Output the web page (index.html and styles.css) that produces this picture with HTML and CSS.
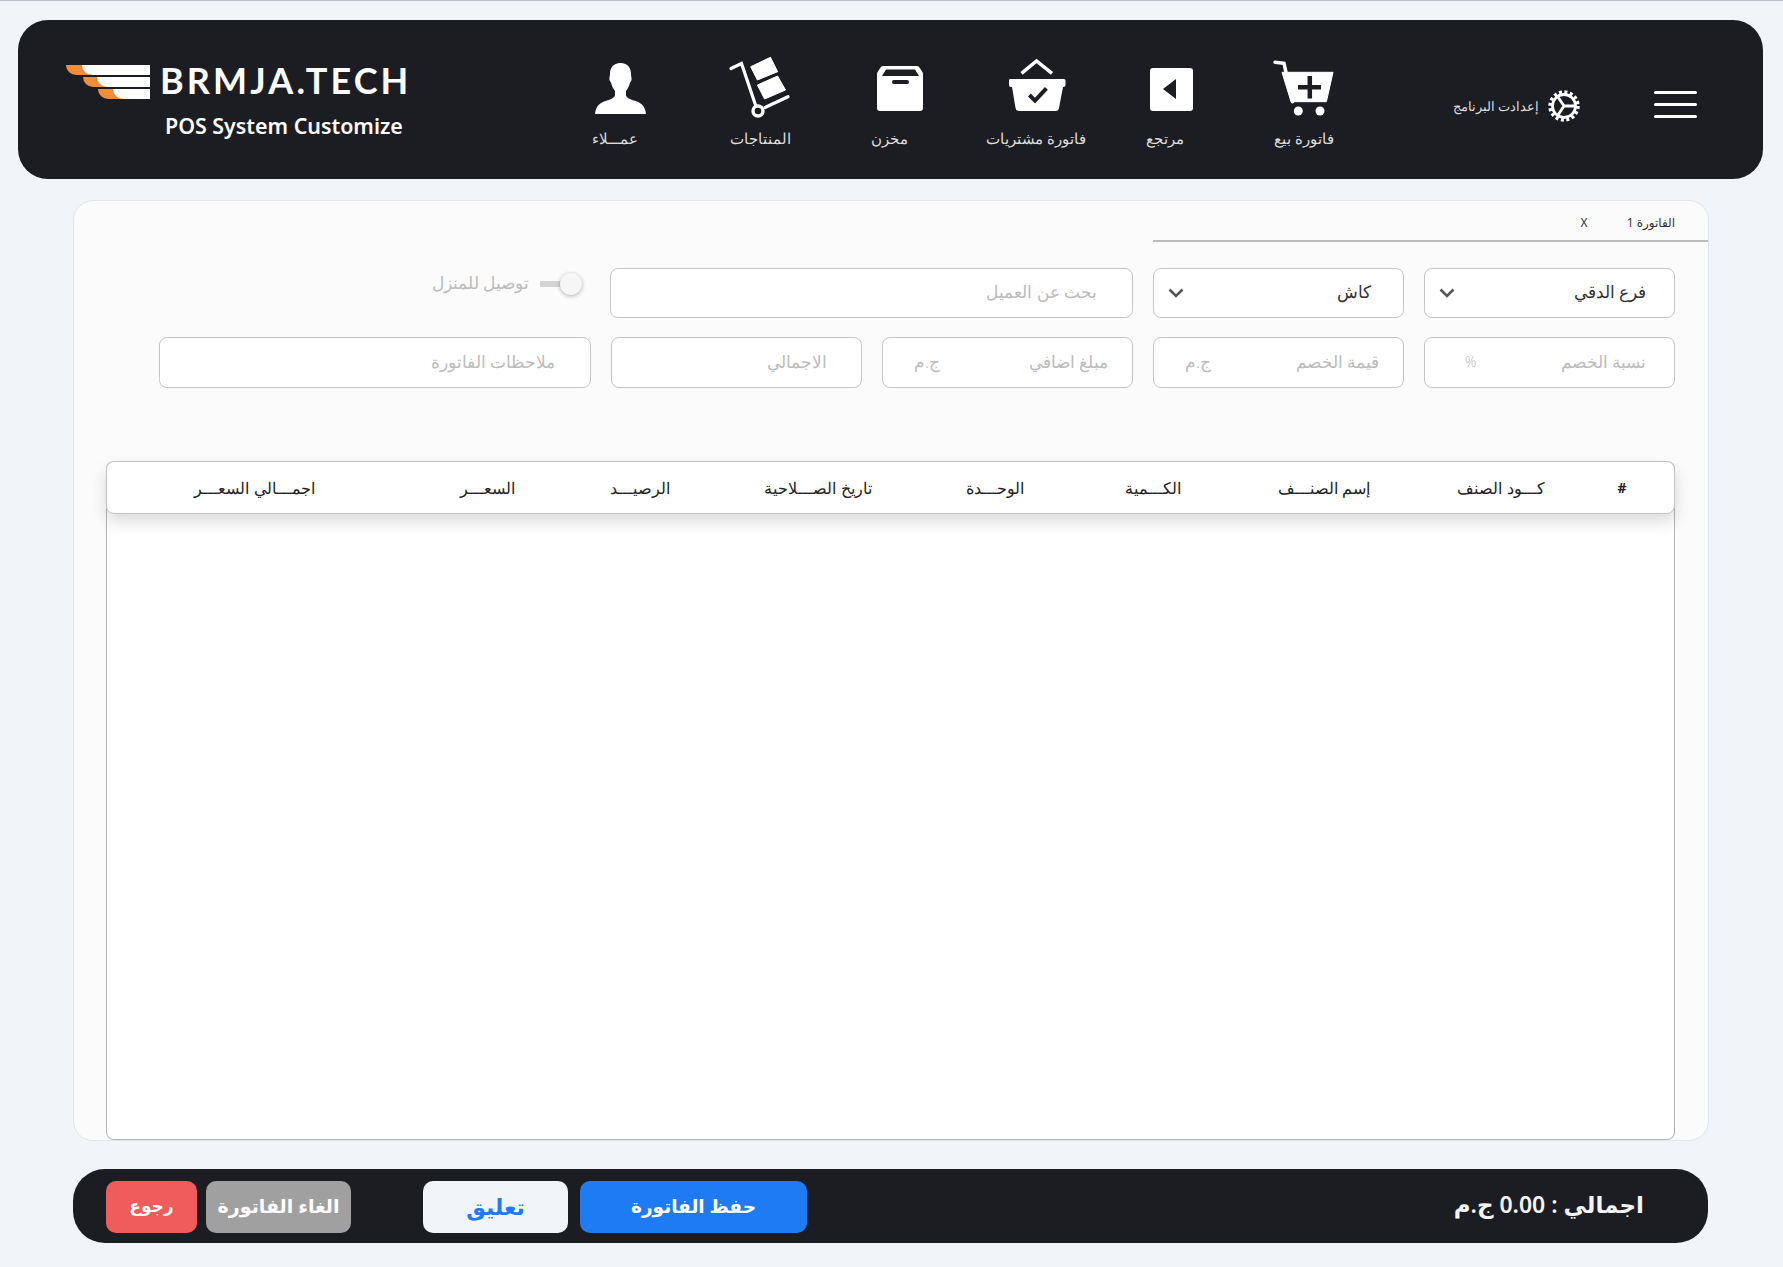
FILE: index.html
```html
<!DOCTYPE html>
<html lang="ar" dir="rtl">

<head>
    <meta charset="UTF-8">
    <meta name="viewport" content="width=device-width, initial-scale=1.0">
    <title>فاتورة بيع</title>
    <link rel="stylesheet" href="styles.css">
</head>

<body>
    <header class="topbar">
        <div class="burger"><span></span><span></span><span></span></div>

        <div class="settings">
            <svg class="gear" viewBox="0 0 32 32" width="32" height="32">
                <circle cx="16" cy="16" r="14" fill="none" stroke="#fff" stroke-width="3.4" stroke-dasharray="3 2.5"></circle>
                <circle cx="16" cy="16" r="11.5" fill="none" stroke="#fff" stroke-width="2.8"></circle>
                <path d="M16 16L10 7M16 16L10 25M16 16H27" stroke="#fff" stroke-width="2.8" fill="none"></path>
            </svg>
            <span>إعدادت البرنامج</span>
        </div>

        <nav class="nav">
            <a class="nav-item w-cart">
                <svg viewBox="0 0 64 64" width="64" height="64">
                    <path d="M3 6.300L12 7.300L20.500 45.700" fill="none" stroke="#fff" stroke-width="3.500" stroke-linecap="round"></path>
                    <path d="M10 16.300H61L54.400 45.700H19Z" fill="#fff" stroke="#fff" stroke-linejoin="round"></path>
                    <path d="M26 31.300H49M37.800 20V42.500" stroke="#1c1d22" stroke-width="4.500"></path>
                    <circle cx="26.300" cy="55" r="4.500" fill="#fff"></circle>
                    <circle cx="48" cy="55" r="4.500" fill="#fff"></circle>
                </svg>
                <span>فاتورة بيع</span>
            </a>
            <a class="nav-item w-return">
                <svg viewBox="0 0 64 64" width="64" height="64">
                    <path fill-rule="evenodd" d="M20 12H57a3 3 0 0 1 3 3V52a3 3 0 0 1-3 3H20a3 3 0 0 1-3-3V15a3 3 0 0 1 3-3ZM43 23L30 33L43 43Z" fill="#fff"></path>
                </svg>
                <span>مرتجع</span>
            </a>
            <a class="nav-item w-basket">
                <svg viewBox="0 0 64 64" width="64" height="64">
                    <path d="M17.500 17.300L32.500 5L48 17.300" fill="none" stroke="#fff" stroke-width="3.500"></path>
                    <path d="M6 23H60a1.500 1.500 0 0 1 1.500 1.500V29a2 2 0 0 1-2 2H59L55 52a3.500 3.500 0 0 1-3.500 3H15a3.500 3.500 0 0 1-3.500-3L8 31H7a2 2 0 0 1-2-2V24.500A1.500 1.500 0 0 1 6 23Z" fill="#fff"></path>
                    <path d="M25.400 39L31 44.700L42.400 32.300" fill="none" stroke="#1c1d22" stroke-width="4"></path>
                </svg>
                <span>فاتورة مشتريات</span>
            </a>
            <a class="nav-item w-box">
                <svg class="box-icon" viewBox="0 0 64 64" width="64" height="64">
                    <path fill-rule="evenodd" d="M25 10H59Q60.500 10 61.500 11.500L65 17V52a3 3 0 0 1-3 3H22a3 3 0 0 1-3-3V17L22.500 11.500Q23.500 10 25 10ZM28 13.500L24 20H61L57 13.500ZM36 24a2 2 0 0 0 0 4H49a2 2 0 0 0 0-4Z" fill="#fff"></path>
                </svg>
                <span>مخزن</span>
            </a>
            <a class="nav-item w-trolley">
                <svg viewBox="0 0 64 64" width="64" height="64">
                    <path d="M2 12.500L12.500 7.500L26.500 49" fill="none" stroke="#fff" stroke-width="3.200" stroke-linecap="round"></path>
                    <path d="M36 51.500L59 40.700" fill="none" stroke="#fff" stroke-width="3.200" stroke-linecap="round"></path>
                    <circle cx="29" cy="55" r="5" fill="none" stroke="#fff" stroke-width="3.400"></circle>
                    <path d="M21.700 10.700L41.500 1.300L48.600 15.700L28.400 24Z" fill="#fff" stroke="#fff" stroke-linejoin="round"></path>
                    <path d="M28.400 29L48.600 20L56.500 34L35.600 43Z" fill="#fff" stroke="#fff" stroke-linejoin="round"></path>
                </svg>
                <span>المنتاجات</span>
            </a>
            <a class="nav-item w-person">
                <svg viewBox="0 0 64 64" width="64" height="64">
                    <path d="M37.500 7C30 7 27 12 27 18c0 2-.6 3-.6 5s1 3 1.600 3.500c.6 3 2 6 4 8.500v4c0 2-3 4-8 5.500c-6 2-11 4-12 13.500h51c-1-9.500-6-11.500-12-13.500c-5-1.500-8-3.500-8-5.500v-4c2-2.500 3.400-5.500 4-8.500c.6-.5 1.600-1.500 1.600-3.500s-.6-3-.6-5c0-6-3-11-10.500-11z" fill="#fff"></path>
                </svg>
                <span>عمـــلاء</span>
            </a>
        </nav>

        <div class="logo" dir="ltr">
            <div class="logo-row">
                <svg viewBox="0 0 84 34" width="84" height="34">
                    <path d="M0 0H24V10H10A10 10 0 0 1 0 0Z" fill="#f28c38"></path>
                    <path d="M16 0H84V10H26A10 10 0 0 1 16 0Z" fill="#fff"></path>
                    <path d="M17 12H40V22H27A10 10 0 0 1 17 12Z" fill="#f28c38"></path>
                    <path d="M31 12H84V22H41A10 10 0 0 1 31 12Z" fill="#fff"></path>
                    <path d="M32 24H56V34H42A10 10 0 0 1 32 24Z" fill="#f28c38"></path>
                    <path d="M47 24H84V34H57A10 10 0 0 1 47 24Z" fill="#fff"></path>
                </svg>
                <span class="brand">BRMJA.TECH</span>
            </div>
            <div class="tagline">POS System Customize</div>
        </div>
    </header>

    <main class="panel">
        <div class="tabs">
            <span>الفاتورة 1</span>
            <span class="tab-close">X</span>
        </div>

        <div class="form-row">
            <div class="field w-251 pick">
                <span>فرع الدقي</span>
                <svg class="chevron" viewBox="0 0 16 10" width="16" height="10"><path d="M1.500 1.500L8 8L14.500 1.500" fill="none" stroke="#555" stroke-width="2.500"></path></svg>
            </div>
            <div class="field w-251 pick pick-cash">
                <span>كاش</span>
                <svg class="chevron" viewBox="0 0 16 10" width="16" height="10"><path d="M1.500 1.500L8 8L14.500 1.500" fill="none" stroke="#555" stroke-width="2.500"></path></svg>
            </div>
            <div class="field w-523 pad-35"><input type="text" placeholder="بحث عن العميل"></div>
            <div class="delivery">
                <span class="switch"></span>
                <span class="delivery-text">توصيل للمنزل</span>
            </div>
        </div>

        <div class="form-row">
            <div class="field w-251 row-2">
                <input type="text" placeholder="نسبة الخصم">
                <span class="unit unit-percent">%</span>
            </div>
            <div class="field w-251 row-2 pad-24">
                <input type="text" placeholder="قيمة الخصم">
                <span class="unit">ج.م</span>
            </div>
            <div class="field w-251 row-2 pad-24">
                <input type="text" placeholder="مبلغ اضافي">
                <span class="unit">ج.م</span>
            </div>
            <div class="field w-251 row-2 pad-34"><input type="text" placeholder="الاجمالي"></div>
            <div class="field w-432 row-2 pad-35"><input type="text" placeholder="ملاحظات الفاتورة"></div>
        </div>

        <section class="items">
            <div class="items-head">
                <span class="hash">#</span>
                <span>كـــود الصنف</span>
                <span>إسم الصنـــف</span>
                <span>الكـــمية</span>
                <span>الوحـــدة</span>
                <span>تاريخ الصـــلاحية</span>
                <span>الرصيـــد</span>
                <span>السعـــر</span>
                <span class="last-col">اجمـــالي السعـــر</span>
            </div>
        </section>
    </main>

    <footer class="bottombar">
        <div class="grand-total">اجمالي : 0.00 ج.م</div>
        <button class="btn btn-save">حفظ الفاتورة</button>
        <button class="btn btn-hold">تعليق</button>
        <button class="btn btn-cancel">الغاء الفاتورة</button>
        <button class="btn btn-back">رجوع</button>
    </footer>
</body>

</html>
```

FILE: styles.css
```css
* {
    box-sizing: border-box;
}

body {
    margin: 0;
    height: 1267px;
    overflow: hidden;
    background: #f1f4f9;
    border-top: 1px solid #b9c2cb;
    font-family: "Noto Sans", "DejaVu Sans", sans-serif;
}

.topbar {
    display: flex;
    align-items: flex-start;
    height: 159px;
    margin: 19px 20px 0 18px;
    padding: 36px 66px 0 48px;
    border-radius: 30px;
    background: #1c1d22;
    color: #fff;
}

.burger {
    display: flex;
    flex-direction: column;
    gap: 9px;
    width: 43px;
    margin-top: 35px;
}

.burger span {
    height: 3px;
    border-radius: 2px;
    background: #fff;
}

.settings {
    display: flex;
    align-items: center;
    gap: 9px;
    margin: 34px 74px 0 64px;
    font-size: 13px;
    font-weight: 300;
    color: #ddd;
}

.nav {
    display: flex;
}

.nav-item {
    display: flex;
    flex-direction: column;
    align-items: center;
    font-size: 15px;
    font-weight: 300;
    color: #ddd;
}

.nav-item svg {
    overflow: visible;
}

.nav-item span {
    margin-top: 8px;
    white-space: nowrap;
}

.w-cart { width: 170px; }
.w-return { width: 108px; }
.w-basket { width: 150px; }
.w-box { width: 142px; }
.w-trolley { width: 116px; }
.w-person { width: 176px; }

.logo {
    margin: 9px auto 0 0;
}

.logo-row {
    display: flex;
    align-items: flex-start;
    gap: 10px;
}

.brand {
    margin-top: -2px;
    font-family: "Lato", sans-serif;
    font-size: 36px;
    font-weight: 700;
    line-height: 34px;
    letter-spacing: 3.100px;
}

.tagline {
    margin: 14px 0 0 99px;
    font-size: 21.400px;
    font-weight: 600;
    line-height: 26px;
    white-space: nowrap;
}

.panel {
    display: flex;
    flex-direction: column;
    height: 941px;
    margin: 21px 74px 0 73px;
    padding: 0 33px 0 32px;
    border: 1px solid #e1e4e8;
    border-radius: 20px;
    background: #fbfbfb;
}

.tabs {
    display: flex;
    align-items: center;
    gap: 39px;
    height: 41px;
    width: 555px;
    margin-right: -33px;
    padding: 3px 33px 0 0;
    border-bottom: 2px solid #bbb;
    font-size: 12px;
    color: #333;
}

.form-row {
    display: flex;
    align-items: center;
    gap: 20px;
    margin-top: 19px;
}

.tabs + .form-row {
    margin-top: 26px;
}

.field {
    display: flex;
    align-items: center;
    justify-content: space-between;
    height: 50px;
    padding: 0 28px 4px;
    border: 1px solid #c6c6c6;
    border-radius: 8px;
    background: #fff;
    font-size: 17px;
    font-weight: 300;
    color: #333;
}

.row-2 {
    height: 51px;
    padding-bottom: 2px;
}

.field input {
    flex: 1;
    min-width: 0;
    padding: 0;
    border: 0;
    outline: 0;
    background: transparent;
    font: inherit;
    color: #333;
}

.field input::placeholder {
    color: #bbb;
    opacity: 1;
}

.w-251 { width: 251px; }
.w-523 { width: 523px; }
.w-432 { width: 432px; }

.pad-24 { padding-right: 24px; padding-left: 31px; }
.pad-34 { padding-right: 34px; }
.pad-35 { padding-right: 35px; }

.pick {
    padding-left: 14px;
    padding-bottom: 0;
}

.pick > span {
    padding-bottom: 4px;
}

.pick-cash {
    padding-right: 32px;
}

.unit {
    color: #bbb;
}

.unit-percent {
    margin-left: 12px;
    font-size: 14px;
}

.delivery {
    display: flex;
    align-items: center;
    gap: 11px;
    margin-top: -18px;
    font-size: 16.500px;
    font-weight: 300;
    color: #bbb;
}

.delivery-text {
    padding-bottom: 4px;
}

.switch {
    position: relative;
    width: 32px;
    height: 6px;
    margin-right: 18px;
    background: #d4d4d4;
}

.switch::after {
    content: "";
    position: absolute;
    top: -8px;
    right: -10px;
    width: 22px;
    height: 22px;
    border-radius: 50%;
    background: #f6f6f6;
    box-shadow: 0 1px 4px rgba(0, 0, 0, .3);
}

.items {
    flex: 1;
    margin-top: 73px;
    border: 1px solid #b4b4b4;
    border-top: 0;
    border-radius: 8px;
    background: #fff;
}

.items-head {
    display: grid;
    grid-template-columns: 104px 138px 216px 126px 190px 164px 192px 114px 1fr;
    align-items: center;
    height: 53px;
    margin: 0 -1px;
    border: 1px solid #c4c4c4;
    border-radius: 8px;
    background: #fff;
    box-shadow: 0 8px 16px rgba(0, 0, 0, .14);
    font-size: 16px;
    font-weight: 300;
    color: #222;
    text-align: center;
}

.items-head span {
    white-space: nowrap;
}

.hash {
    font-size: 14px;
    font-weight: 700;
}

.last-col {
    padding-right: 28px;
}

.bottombar {
    display: flex;
    align-items: center;
    height: 74px;
    margin: 28px 75px 0 73px;
    padding: 2px 64px 0 0;
    border-radius: 32px;
    background: #1c1d22;
}

.grand-total {
    width: 837px;
    padding-bottom: 6px;
    font-size: 23px;
    font-weight: 600;
    color: #f4f4f4;
    white-space: nowrap;
}

.btn {
    height: 52px;
    padding: 0 0 3px;
    border: 0;
    border-radius: 10px;
    font-family: inherit;
    font-size: 19px;
    font-weight: 600;
    color: #fff;
}

.btn-save {
    width: 227px;
    background: #1f7bf4;
    font-size: 18.500px;
}

.btn-hold {
    width: 145px;
    margin-right: 12px;
    background: #f1f4f9;
    color: #1f7bf4;
    font-size: 22px;
}

.btn-cancel {
    width: 145px;
    margin-right: 72px;
    background: #a0a0a0;
}

.btn-back {
    width: 91px;
    margin-right: 9px;
    background: #f05c5c;
    font-size: 17px;
}
```
